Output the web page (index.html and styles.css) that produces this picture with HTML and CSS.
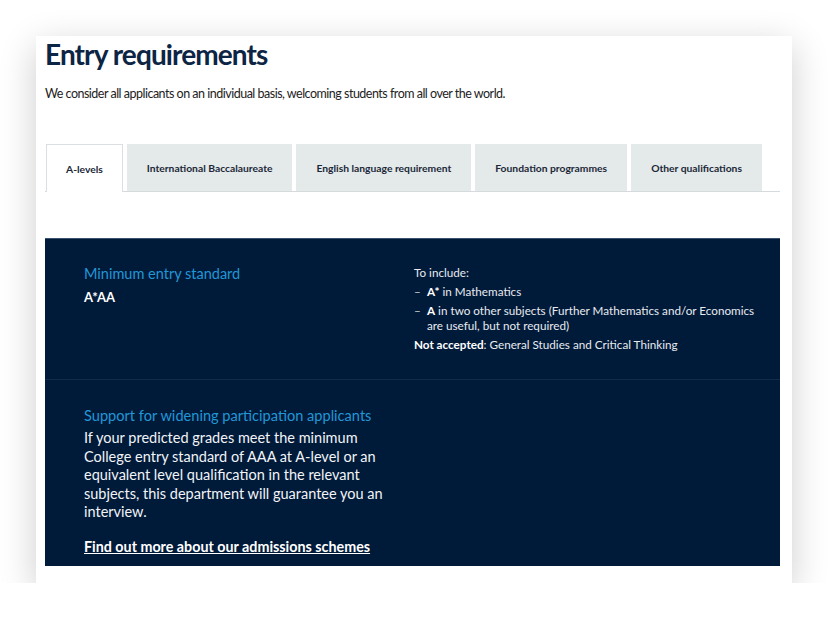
FILE: index.html
```html
<!DOCTYPE html>
<html>
<head>
  <meta charset="UTF-8">
  <title>Entry requirements</title>
  <link rel="stylesheet" href="styles.css">
</head>
<body>
  <div class="card">
    <h1 class="title">Entry requirements</h1>
    <p class="intro">We consider all applicants on an individual basis, welcoming students from all over the world.</p>

    <ul class="tabs">
      <li class="tab active">A-levels</li>
      <li class="tab">International Baccalaureate</li>
      <li class="tab">English language requirement</li>
      <li class="tab">Foundation programmes</li>
      <li class="tab">Other qualifications</li>
    </ul>

    <div class="panel">
      <div class="panel-row">
        <div class="col-left">
          <h3 class="panel-heading">Minimum entry standard</h3>
          <p class="grade">A*AA</p>
        </div>
        <div class="col-right">
          <p>To include:</p>
          <ul class="dash-list">
            <li><b>A*</b> in Mathematics</li>
            <li><b>A</b> in two other subjects (Further Mathematics and/or Economics are useful, but not required)</li>
          </ul>
          <p><b>Not accepted</b>: General Studies and Critical Thinking</p>
        </div>
      </div>
      <div class="panel-row lower">
        <div class="col-left">
          <h3 class="panel-heading large">Support for widening participation applicants</h3>
          <p class="support-text">If your predicted grades meet the minimum College entry standard of AAA at A-level or an equivalent level qualification in the relevant subjects, this department will guarantee you an interview.</p>
          <a class="more-link" href="#">Find out more about our admissions schemes</a>
        </div>
      </div>
    </div>
  </div>
</body>
</html>
```

FILE: styles.css
```css
body {
  margin: 0;
  background: #fff;
  font-family: Lato, "Noto Sans", sans-serif;
  color: #222;
}
.card {
  width: 756px;
  margin: 36px 0 0 36px;
  padding: 0 12px 17px 9px;
  box-sizing: border-box;
  background: #fff;
  box-shadow: 0 10px 35px rgba(0, 0, 0, 0.2);
}
.title {
  margin: 0;
  font-size: 28px;
  line-height: 36px;
  font-weight: 700;
  letter-spacing: -0.9px;
  color: #0d2544;
}
.intro {
  margin: 13px 0 0;
  font-size: 12.5px;
  line-height: 18px;
  letter-spacing: -0.5px;
  color: #222;
}
.tabs {
  display: flex;
  gap: 4px;
  margin: 41px 0 0;
  padding: 0;
  list-style: none;
  border-bottom: 1px solid #d5dadd;
}
.tab {
  height: 47px;
  padding: 0 20px;
  display: flex;
  align-items: center;
  white-space: nowrap;
  background: #e4e9ea;
  font-size: 10.3px;
  font-weight: 700;
  color: #1b2838;
  cursor: pointer;
}
.tab.active {
  padding: 0 19px;
  margin-left: 1px;
  background: #fff;
  border: 1px solid #dcdfe2;
  border-bottom: none;
  margin-bottom: -1px;
}
.panel {
  margin-top: 46px;
  background: #001a3a;
  border-top: 1px solid #3a5470;
  color: #e8ebef;
}
.panel-row {
  display: flex;
  padding: 26px 0 27px 39px;
}
.panel-row.lower {
  border-top: 1px solid #0f2c4a;
  padding: 26px 0 10px 39px;
}
.col-left {
  width: 330px;
}
.col-right {
  flex: 1;
  font-size: 11.7px;
  line-height: 15px;
  padding-right: 14px;
}
.col-right p {
  margin: 4px 0 0;
}
.col-right p:first-child {
  margin-top: 0;
}
.col-right b {
  color: #fff;
}
.dash-list {
  list-style: none;
  margin: 0;
  padding: 0;
}
.dash-list li {
  margin-top: 4px;
  padding-left: 13px;
  text-indent: -13px;
}
.dash-list li::before {
  content: "\2013";
  display: inline-block;
  width: 13px;
  text-indent: 0;
  color: #c9d0d8;
}
.panel-heading {
  margin: 0;
  font-size: 14.5px;
  line-height: 18px;
  font-weight: 400;
  color: #2297d6;
}
.panel-heading.large {
  font-size: 14.6px;
  line-height: 19px;
}
.grade {
  margin: 5px 0 0;
  font-size: 13px;
  line-height: 18px;
  font-weight: 700;
  color: #fff;
}
.support-text {
  margin: 4px 0 0;
  width: 310px;
  font-size: 14.5px;
  line-height: 18.5px;
  color: #f2f4f7;
}
.more-link {
  display: inline-block;
  margin-top: 16px;
  font-size: 14.3px;
  line-height: 18px;
  font-weight: 700;
  color: #fff;
  text-decoration: underline;
}
```
